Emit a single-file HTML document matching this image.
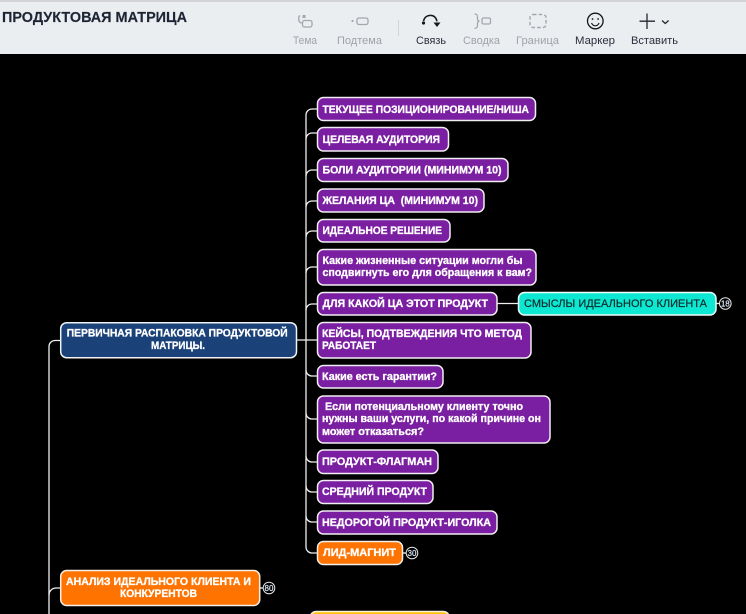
<!DOCTYPE html>
<html lang="ru">
<head>
<meta charset="utf-8">
<title>Продуктовая матрица</title>
<style>
html,body{margin:0;padding:0;background:#000;width:746px;height:614px;overflow:hidden}
svg{display:block;position:absolute;left:0;top:0}
text{font-family:"Liberation Sans",sans-serif}
.b{font-weight:700;fill:#fff;stroke:#fff;stroke-width:.3;font-size:11px}
.t{font-size:11px;fill:#9ea3a9}
.k{font-size:11px;fill:#2b2d3a}
.n{font-size:8px;fill:#dff0ff;stroke:#dff0ff;stroke-width:.15;text-anchor:middle}
.p{fill:#7b1fa2;stroke:#f1edf3;stroke-width:1.5}
.o{fill:#ff7300;stroke:#f5efe9;stroke-width:1.5}
.l{fill:none;stroke:#efefef;stroke-width:1.3}
</style>
</head>
<body>
<svg width="746" height="614" viewBox="0 0 746 614" xmlns="http://www.w3.org/2000/svg">
<rect width="746" height="614" fill="#000"/>
<rect width="746" height="54" fill="#ebeef1"/>
<rect width="746" height="2" fill="#d3d3d7"/>
<text x="2" y="22" font-size="14.5" font-weight="700" fill="#1d2433" stroke="#1d2433" stroke-width=".15" textLength="185" lengthAdjust="spacingAndGlyphs">ПРОДУКТОВАЯ МАТРИЦА</text>

<!-- toolbar icons -->
<g fill="none" stroke="#a3a7ac" stroke-width="1.3">
<rect x="302.500" y="15" width="3" height="3" fill="#a3a7ac" stroke="none"/>
<path d="M300 15.500c-.8.4-1.200 1-1.200 2v2.500a3 3 0 0 0 3 3"/>
<rect x="302.500" y="20.500" width="9.500" height="6.500" rx="2"/>
<circle cx="352.500" cy="21" r="1.100" fill="#a3a7ac" stroke="none"/>
<rect x="357" y="18" width="11" height="6.500" rx="2"/>
<path d="M474.500 14c2.500 0 3 1 3 3v2c0 1.200.6 2 2 2.200-1.400.2-2 1-2 2.200v2c0 2-.5 3-3 3"/>
<rect x="482" y="18" width="8.500" height="6" rx="1.500"/>
<rect x="530" y="14.500" width="16" height="13" rx="3" stroke-dasharray="3.500 2.200" stroke-width="1.400"/>
</g>
<line x1="398.500" y1="20" x2="398.500" y2="36" stroke="#d3d6d9" stroke-width="1"/>
<g fill="none" stroke="#15171c">
<path d="M423.500 21c1-3.800 3.800-5.600 6.800-5.600 3.500 0 5.900 2.300 6.700 6" stroke-width="1.500"/>
<circle cx="423.500" cy="23" r="1.600" fill="#15171c" stroke="none"/>
<path d="M433.500 22.500h7l-3.500 4.500z" fill="#15171c" stroke="none"/>
<circle cx="595.300" cy="21" r="7.800" stroke-width="1.300"/>
<circle cx="592.500" cy="19" r=".9" fill="#15171c" stroke="none"/>
<circle cx="598.100" cy="19" r=".9" fill="#15171c" stroke="none"/>
<path d="M591.500 23c1 2 2.300 2.800 3.800 2.800s2.800-.8 3.800-2.800" stroke-width="1.100"/>
<path d="M647 13.500v15.500M639.500 21.200h15.500" stroke="#25272d" stroke-width="1.300"/>
<path d="M662 20.500l3.300 3 3.300-3" stroke="#25272d" stroke-width="1.300"/>
</g>

<!-- toolbar labels -->
<text class="t" x="293" y="44" textLength="24" lengthAdjust="spacingAndGlyphs">Тема</text>
<text class="t" x="337" y="44" textLength="45" lengthAdjust="spacingAndGlyphs">Подтема</text>
<text class="k" x="416" y="44" textLength="30" lengthAdjust="spacingAndGlyphs">Связь</text>
<text class="t" x="463" y="44" textLength="37" lengthAdjust="spacingAndGlyphs">Сводка</text>
<text class="t" x="516" y="44" textLength="43" lengthAdjust="spacingAndGlyphs">Граница</text>
<text class="k" x="575" y="44" textLength="40" lengthAdjust="spacingAndGlyphs">Маркер</text>
<text class="k" x="631" y="44" textLength="47" lengthAdjust="spacingAndGlyphs">Вставить</text>

<!-- connectors -->
<path class="l" d="M60 340.500h-5a6 6 0 0 0-6 6V614"/>
<path class="l" d="M60 588h-4a7 7 0 0 0-7 7"/>
<path class="l" d="M297 340h20"/>
<path class="l" d="M306 340V115a6 6 0 0 1 6-6h5"/>
<path class="l" d="M306 139a6 6 0 0 1 6-6h5"/>
<path class="l" d="M306 176a6 6 0 0 1 6-6h5"/>
<path class="l" d="M306 207a6 6 0 0 1 6-6h5"/>
<path class="l" d="M306 237a6 6 0 0 1 6-6h5"/>
<path class="l" d="M306 273a6 6 0 0 1 6-6h5"/>
<path class="l" d="M306 310a6 6 0 0 1 6-6h5"/>
<path class="l" d="M306 340V547a6 6 0 0 0 6 6h5"/>
<path class="l" d="M306 370a6 6 0 0 0 6 6h5"/>
<path class="l" d="M306 413a6 6 0 0 0 6 6h5"/>
<path class="l" d="M306 456a6 6 0 0 0 6 6h5"/>
<path class="l" d="M306 486a6 6 0 0 0 6 6h5"/>
<path class="l" d="M306 516a6 6 0 0 0 6 6h5"/>
<path class="l" d="M497 303.500h21"/>
<path class="l" d="M716 303.500h3"/>
<path class="l" d="M402 553h4"/>
<path class="l" d="M260 588h3"/>

<!-- purple branch nodes -->
<rect class="p" x="317.500" y="97.500" width="218" height="23" rx="6"/>
<rect class="p" x="317.500" y="127.500" width="131" height="23.500" rx="6"/>
<rect class="p" x="317.500" y="158.500" width="190.500" height="23" rx="6"/>
<rect class="p" x="317.500" y="189" width="166.500" height="23" rx="6"/>
<rect class="p" x="317.500" y="219.500" width="132.500" height="22.500" rx="6"/>
<rect class="p" x="317.500" y="249.500" width="218.500" height="35.500" rx="6"/>
<rect class="p" x="317.500" y="292.500" width="179.500" height="22.500" rx="6"/>
<rect class="p" x="317.500" y="322.500" width="213.500" height="35.500" rx="6"/>
<rect class="p" x="317.500" y="365.500" width="125.500" height="22.500" rx="6"/>
<rect class="p" x="317.500" y="396" width="232.500" height="47" rx="6"/>
<rect class="p" x="317.500" y="450" width="120.500" height="23.500" rx="6"/>
<rect class="p" x="317.500" y="480.500" width="115.500" height="23" rx="6"/>
<rect class="p" x="317.500" y="511" width="179.500" height="23" rx="6"/>
<rect class="o" x="317.500" y="541.500" width="85" height="23" rx="6"/>
<rect x="518.500" y="292.500" width="197.500" height="22.500" rx="6" fill="#0de8d2" stroke="#eefcfa" stroke-width="1.500"/>

<!-- main nodes -->
<rect x="60.700" y="322.700" width="235.800" height="35" rx="6" fill="#1a4279" stroke="#f0f2f5" stroke-width="1.500"/>
<rect class="o" x="60.700" y="570.500" width="199" height="35" rx="6"/>
<rect x="310.500" y="611.500" width="138.500" height="10" rx="6" fill="#ffc107" stroke="#f7f1dc" stroke-width="1.500"/>

<!-- node text -->
<text class="b" x="322.500" y="113" textLength="206.500" lengthAdjust="spacingAndGlyphs">ТЕКУЩЕЕ ПОЗИЦИОНИРОВАНИЕ/НИША</text>
<text class="b" x="322.500" y="143" textLength="117.500" lengthAdjust="spacingAndGlyphs">ЦЕЛЕВАЯ АУДИТОРИЯ</text>
<text class="b" x="322.500" y="173.500" textLength="179" lengthAdjust="spacingAndGlyphs">БОЛИ АУДИТОРИИ (МИНИМУМ 10)</text>
<text class="b" x="322.500" y="204" textLength="155.500" lengthAdjust="spacingAndGlyphs" xml:space="preserve">ЖЕЛАНИЯ ЦА  (МИНИМУМ 10)</text>
<text class="b" x="322.500" y="234" textLength="119.500" lengthAdjust="spacingAndGlyphs">ИДЕАЛЬНОЕ РЕШЕНИЕ</text>
<text class="b" x="322.500" y="264" textLength="200" lengthAdjust="spacingAndGlyphs">Какие жизненные ситуации могли бы</text>
<text class="b" x="322.500" y="276" textLength="209.500" lengthAdjust="spacingAndGlyphs">сподвигнуть его для обращения к вам?</text>
<text class="b" x="322.500" y="307" textLength="165.500" lengthAdjust="spacingAndGlyphs">ДЛЯ КАКОЙ ЦА ЭТОТ ПРОДУКТ</text>
<text x="524" y="307" font-size="11" font-weight="400" fill="#0d2b2b" stroke="#0d2b2b" stroke-width=".2" textLength="183" lengthAdjust="spacingAndGlyphs">СМЫСЛЫ ИДЕАЛЬНОГО КЛИЕНТА</text>
<text class="b" x="322" y="337" textLength="200" lengthAdjust="spacingAndGlyphs">КЕЙСЫ, ПОДТВЕЖДЕНИЯ ЧТО МЕТОД</text>
<text class="b" x="322" y="349" textLength="54" lengthAdjust="spacingAndGlyphs">РАБОТАЕТ</text>
<text class="b" x="322" y="380" textLength="115" lengthAdjust="spacingAndGlyphs">Какие есть гарантии?</text>
<text class="b" x="325" y="410" textLength="198" lengthAdjust="spacingAndGlyphs">Если потенциальному клиенту точно</text>
<text class="b" x="322" y="422" textLength="219" lengthAdjust="spacingAndGlyphs">нужны ваши услуги, по какой причине он</text>
<text class="b" x="322" y="435" textLength="102" lengthAdjust="spacingAndGlyphs">может отказаться?</text>
<text class="b" x="322" y="465" textLength="110" lengthAdjust="spacingAndGlyphs">ПРОДУКТ-ФЛАГМАН</text>
<text class="b" x="322" y="495" textLength="105" lengthAdjust="spacingAndGlyphs">СРЕДНИЙ ПРОДУКТ</text>
<text class="b" x="322" y="526" textLength="169" lengthAdjust="spacingAndGlyphs">НЕДОРОГОЙ ПРОДУКТ-ИГОЛКА</text>
<text class="b" x="323" y="556" textLength="73" lengthAdjust="spacingAndGlyphs">ЛИД-МАГНИТ</text>
<text class="b" x="66.700" y="336.500" textLength="221" lengthAdjust="spacingAndGlyphs">ПЕРВИЧНАЯ РАСПАКОВКА ПРОДУКТОВОЙ</text>
<text class="b" x="151" y="349" textLength="54" lengthAdjust="spacingAndGlyphs">МАТРИЦЫ.</text>
<text class="b" x="66" y="585" textLength="185" lengthAdjust="spacingAndGlyphs">АНАЛИЗ ИДЕАЛЬНОГО КЛИЕНТА И</text>
<text class="b" x="120" y="597" textLength="77" lengthAdjust="spacingAndGlyphs">КОНКУРЕНТОВ</text>

<!-- count badges -->
<circle cx="725.300" cy="303.500" r="5.800" fill="#000" stroke="#e8e8e8" stroke-width="1"/>
<text class="n" x="725.300" y="306.300">18</text>
<circle cx="412" cy="553" r="5.800" fill="#000" stroke="#e8e8e8" stroke-width="1"/>
<text class="n" x="412" y="555.800">30</text>
<circle cx="269" cy="588" r="5.800" fill="#000" stroke="#e8e8e8" stroke-width="1"/>
<text class="n" x="269" y="590.800">80</text>
</svg>
</body>
</html>
